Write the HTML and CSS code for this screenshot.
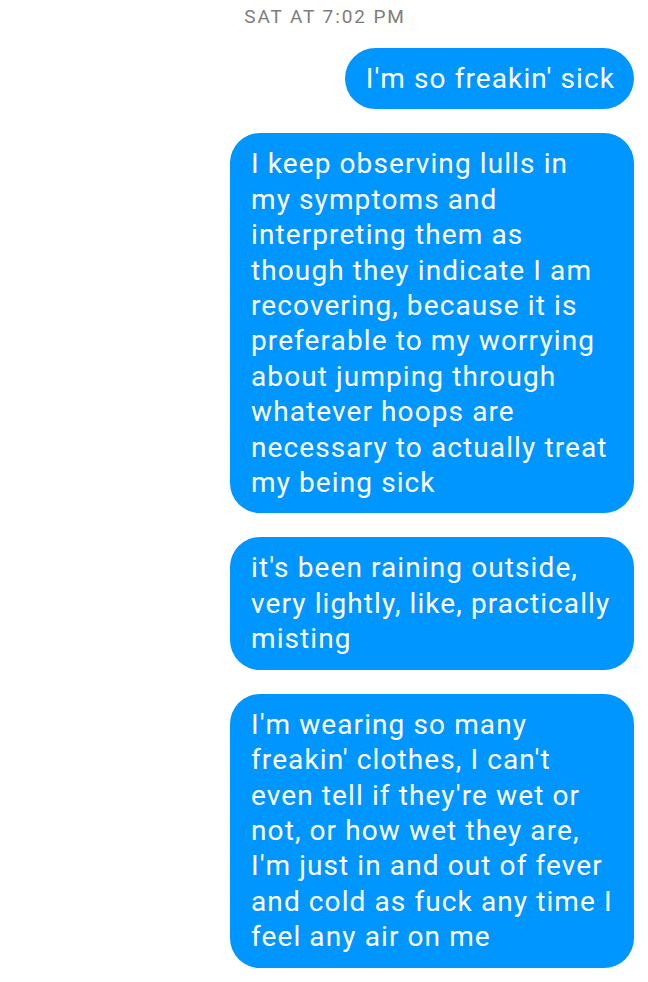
FILE: index.html
```html
<!DOCTYPE html>
<html>
<head>
<meta charset="utf-8">
<link rel="stylesheet" href="styles.css">
</head>
<body>
<div class="thread">
  <div class="time">SAT AT 7:02 PM</div>
  <div class="msgs">
    <div class="bubble pill">I'm so freakin' sick</div>
    <div class="bubble">I keep observing lulls in<br>my symptoms and<br>interpreting them as<br>though they indicate I am<br>recovering, because it is<br>preferable to my worrying<br>about jumping through<br>whatever hoops are<br>necessary to actually treat<br>my being sick</div>
    <div class="bubble">it's been raining outside,<br>very lightly, like, practically<br>misting</div>
    <div class="bubble">I'm wearing so many<br>freakin' clothes, I can't<br>even tell if they're wet or<br>not, or how wet they are,<br>I'm just in and out of fever<br>and cold as fuck any time I<br>feel any air on me</div>
  </div>
</div>
</body>
</html>
```
FILE: styles.css
```css
html, body {
  margin: 0;
  padding: 0;
  background: #ffffff;
}
body {
  width: 648px;
  height: 982px;
  overflow: hidden;
  font-family: Roboto, "Noto Sans", sans-serif;
}
.thread {
  display: flex;
  flex-direction: column;
}
.time {
  text-align: center;
  color: #7d7d7d;
  font-size: 19px;
  letter-spacing: 1.9px;
  line-height: 24px;
  padding-top: 5px;
  padding-left: 2px;
}
.msgs {
  display: flex;
  flex-direction: column;
  align-items: flex-end;
  gap: 24px;
  padding: 19px 14px 0 0;
}
.bubble {
  box-sizing: border-box;
  max-width: 404px;
  width: 404px;
  background: #0096ff;
  color: #ffffff;
  font-size: 28px;
  letter-spacing: 1.1px;
  line-height: 35.4px;
  padding: 13px 19px 13px 21px;
  border-radius: 30px;
  white-space: nowrap;
}
.bubble.pill {
  width: auto;
  border-radius: 31px;
}
```
